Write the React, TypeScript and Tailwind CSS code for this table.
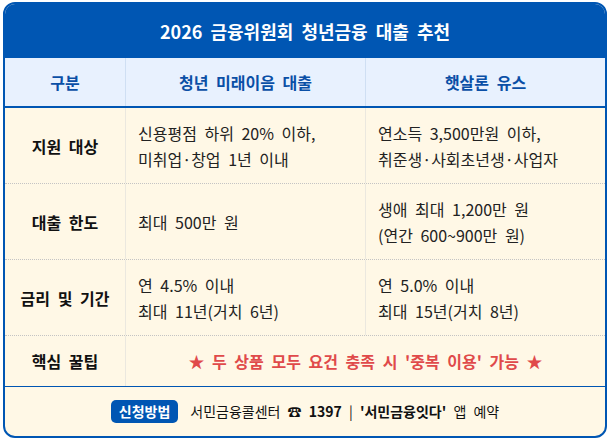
const rows = [
  {
    label: '지원 대상',
    youth: ['신용평점 하위 20% 이하,', '미취업·창업 1년 이내'],
    sunshine: ['연소득 3,500만원 이하,', '취준생·사회초년생·사업자'],
  },
  {
    label: '대출 한도',
    youth: ['최대 500만 원'],
    sunshine: ['생애 최대 1,200만 원', '(연간 600~900만 원)'],
  },
  {
    label: '금리 및 기간',
    youth: ['연 4.5% 이내', '최대 11년(거치 6년)'],
    sunshine: ['연 5.0% 이내', '최대 15년(거치 8년)'],
  },
];

const Lines = ({ lines }: { lines: string[] }) => (
  <div className="flex flex-col justify-center px-3 text-[16px] leading-[26px] text-[#222]">
    {lines.map((line) => (
      <p key={line}>{line}</p>
    ))}
  </div>
);

const App = () => {
  return (
    <div
      className="h-[441px] w-[610px] bg-white px-[3px] pt-[2px] [word-spacing:4px]"
      style={{ fontFamily: '"Noto Sans CJK KR", "Noto Sans", sans-serif' }}
    >
      <div className="flex h-[436px] flex-col overflow-hidden rounded-[12px] border-2 border-[#0056b3] bg-[#fff8e6]">
        {/* title */}
        <div className="flex h-[54px] shrink-0 items-center justify-center bg-[#0056b3] text-[18px] font-bold text-white">
          2026 금융위원회 청년금융 대출 추천
        </div>

        {/* column header */}
        <div className="grid h-[50px] shrink-0 grid-cols-[121px_240px_1fr] border-b-2 border-[#0056b3] bg-[#e8f1fe] text-[16px] font-semibold text-[#0a4fa6]">
          <div className="flex items-center justify-center border-r border-[#cfdff3]">구분</div>
          <div className="flex items-center justify-center border-r border-[#cfdff3]">청년 미래이음 대출</div>
          <div className="flex items-center justify-center">햇살론 유스</div>
        </div>

        {rows.map((row) => (
          <div
            key={row.label}
            className="grid h-[76px] shrink-0 grid-cols-[121px_240px_1fr] border-b border-dotted border-[#c4c4c4]"
          >
            <div className="flex items-center justify-center border-r border-[#ebe8df] text-[16px] font-bold text-[#111]">
              {row.label}
            </div>
            <div className="flex border-r border-[#ebe8df]">
              <Lines lines={row.youth} />
            </div>
            <div className="flex">
              <Lines lines={row.sunshine} />
            </div>
          </div>
        ))}

        <div className="grid h-[51px] shrink-0 grid-cols-[121px_1fr] border-b border-[#0056b3]">
          <div className="flex items-center justify-center border-r border-[#ebe8df] text-[16px] font-bold text-[#111]">
            핵심 꿀팁
          </div>
          <div className="flex items-center justify-center text-[16px] font-semibold text-[#e04a4a]">
            ★ 두 상품 모두 요건 충족 시 '중복 이용' 가능 ★
          </div>
        </div>

        {/* footer */}
        <div className="flex flex-1 items-center justify-center gap-3 text-[14px] text-[#111]">
          <span className="rounded-[5px] bg-[#0056b3] px-2 py-[1px] font-semibold text-white">신청방법</span>
          <span>
            서민금융콜센터 <b>☎ 1397</b> | <b>'서민금융잇다'</b> 앱 예약
          </span>
        </div>
      </div>
    </div>
  );
};

export default App;
